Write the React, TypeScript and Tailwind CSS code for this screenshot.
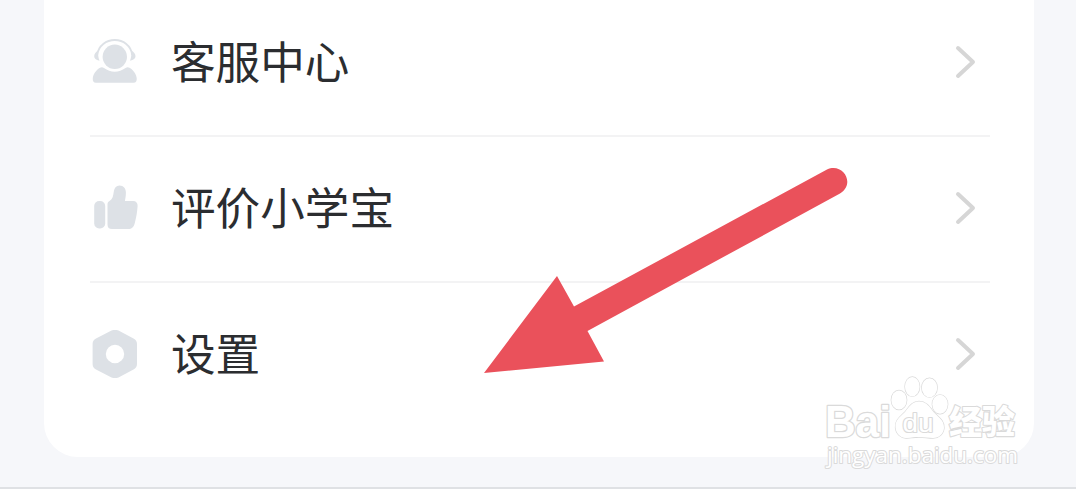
import type { ReactNode } from "react";

const ServiceIcon = () => (
  <svg className="h-12 w-12 shrink-0" viewBox="0 0 48 48" fill="#dde1e6">
    <path
      d="M6.200 17C7.200 7.500 15.500 2 23.800 2S40.200 7.500 41.200 17"
      fill="none"
      stroke="#dde1e6"
      strokeWidth="1.800"
    />
    <path d="M7.500 12.500C4.800 13.500 3.200 16 3.200 18.200S4.800 22 8.500 22.800C7.200 19.500 6.800 16 7.500 12.500Z" />
    <path d="M40 12.500C42.800 13.500 44.500 16 44.500 18.200S42.800 22 39 22.800C40.300 19.500 40.700 16 40 12.500Z" />
    <circle cx="23.800" cy="18.800" r="12.200" />
    <path d="M9 29.800C10.500 28.800 11.800 29.200 13 30C19.500 34.900 28 34.900 34.500 30C35.800 29.200 37 28.900 38.500 29.800C42 31.800 45 35.500 45.700 40C46 43 45 44.800 42.500 44.800H5C2.500 44.800 1.500 43 1.800 40C2.500 35.500 5.500 31.800 9 29.800Z" />
  </svg>
);

const ThumbIcon = () => (
  <svg className="h-12 w-12 shrink-0" viewBox="0 0 48 48" fill="#dde1e6">
    <rect x="3.200" y="17" width="11" height="27.500" rx="5" />
    <path d="M16.500 20.500C16.500 18.500 17.200 17.600 18.800 16.700C21.500 15 22.300 12 22.800 7.500C23.300 3.500 25.500 1.500 28.500 1.500C32.500 1.500 34.900 4.500 34.900 8.500C34.900 11.500 34.500 14 33.900 17H42C45.200 17 46.800 19 46.600 22C46.200 28 45.300 33.500 43.800 39C42.700 43 41 45 37 45H21C18 45 16.500 43.500 16.500 40.500Z" />
  </svg>
);

const SettingsIcon = () => (
  <svg className="h-12 w-12 shrink-0" viewBox="0 0 48 48" fill="#dde1e6">
    <path
      fillRule="evenodd"
      d="M20.500 .6C22.600 -.4 25.400 -.4 27.500 .6L42.500 8.500C44.800 9.800 46 11.500 46 14V34C46 36.500 44.800 38.200 42.500 39.500L27.500 47.400C25.400 48.400 22.600 48.400 20.500 47.400L5 39.500C2.700 38.200 1.600 36.500 1.600 34V14C1.600 11.500 2.700 9.800 5 8.500ZM24 14.800A9.200 9.200 0 1 0 24 33.200A9.200 9.200 0 1 0 24 14.800Z"
    />
  </svg>
);

const Arrow = () => (
  <svg
    className="pointer-events-none absolute left-[480px] top-[160px]"
    width="380"
    height="220"
    viewBox="480 160 380 220"
  >
    <path
      d="M484 373L557 276L574 306.500L827 169.500C843 162 856 184 840 193.500L587.500 331L604 361.500Z"
      fill="#ea515b"
    />
  </svg>
);

const Watermark = () => (
  <svg
    className="pointer-events-none absolute left-[820px] top-[370px]"
    width="204"
    height="104"
    viewBox="820 370 204 104"
    fill="#fff"
    stroke="#dadada"
    strokeWidth="1.300"
    strokeLinejoin="round"
    fontFamily="'Liberation Sans', 'Noto Sans CJK SC', sans-serif"
    paintOrder="stroke"
  >
    <text x="825" y="436.500" fontSize="44" fontWeight="700" textLength="66" lengthAdjust="spacingAndGlyphs" strokeWidth="2.600">
      Bai
    </text>
    <ellipse cx="899" cy="400" rx="7.700" ry="9.500" />
    <ellipse cx="912.300" cy="386.700" rx="7.300" ry="9.700" />
    <ellipse cx="929.500" cy="387.700" rx="7.700" ry="9.500" />
    <ellipse cx="940" cy="404.300" rx="7.700" ry="9.500" />
    <path d="M919 401.500C912 401.500 909 407 905 412C900 417 895 420 895.500 427.500C896 434 901 438.500 907 438C912 437.600 915 437 919 437C924 437 928 438 933 438C939 438 943.500 434 944 428C944.300 420 938 417 933.500 412C929 406 926 401.500 919 401.500Z" />
    <text x="902.500" y="431.500" fontSize="26" fontWeight="400" textLength="31" lengthAdjust="spacingAndGlyphs" strokeWidth="2.200">
      du
    </text>
    <text x="949" y="433.500" fontSize="33" fontWeight="900" fontFamily="'Noto Sans CJK SC', sans-serif" textLength="66" strokeWidth="2.200">
      经验
    </text>
    <text x="827" y="462.500" fontSize="22" fontFamily="'Open Sans', sans-serif" textLength="191" lengthAdjust="spacingAndGlyphs" strokeWidth="2">
      jingyan.baidu.com
    </text>
  </svg>
);

const MenuRow = ({
  icon,
  label,
  last,
}: {
  icon: ReactNode;
  label: string;
  last?: boolean;
}) => (
  <button
    className={`flex h-[146px] w-full shrink-0 items-center border-b-2 pb-[2px] pl-px text-left ${
      last ? "border-transparent" : "border-[#f3f3f4]"
    }`}
  >
    {icon}
    <span className="ml-[32px] pb-[3px] text-[44.600px] leading-none text-[#2b2d30]">
      {label}
    </span>
    <svg className="ml-auto mr-[13px]" width="26" height="36" viewBox="0 0 26 36" fill="none">
      <path
        d="M7 4L22 18L7 32"
        stroke="#d6d6d6"
        strokeWidth="4"
        strokeLinecap="round"
        strokeLinejoin="round"
      />
    </svg>
  </button>
);

const App = () => {
  return (
    <div className="relative h-[492px] w-[1076px] overflow-hidden bg-white font-['Noto_Sans_CJK_SC',sans-serif]">
      <div className="h-[489px] border-b-2 border-[#dfe1e4] bg-[#f6f7fa] pl-[44px] pr-[42px]">
        <div className="flex h-[457px] flex-col justify-end rounded-b-[34px] bg-white pb-[28px] pl-[46px] pr-[44px]">
          <MenuRow icon={<ServiceIcon />} label="客服中心" />
          <MenuRow icon={<ThumbIcon />} label="评价小学宝" />
          <MenuRow icon={<SettingsIcon />} label="设置" last />
        </div>
      </div>
      <Arrow />
      <Watermark />
    </div>
  );
};

export default App;
